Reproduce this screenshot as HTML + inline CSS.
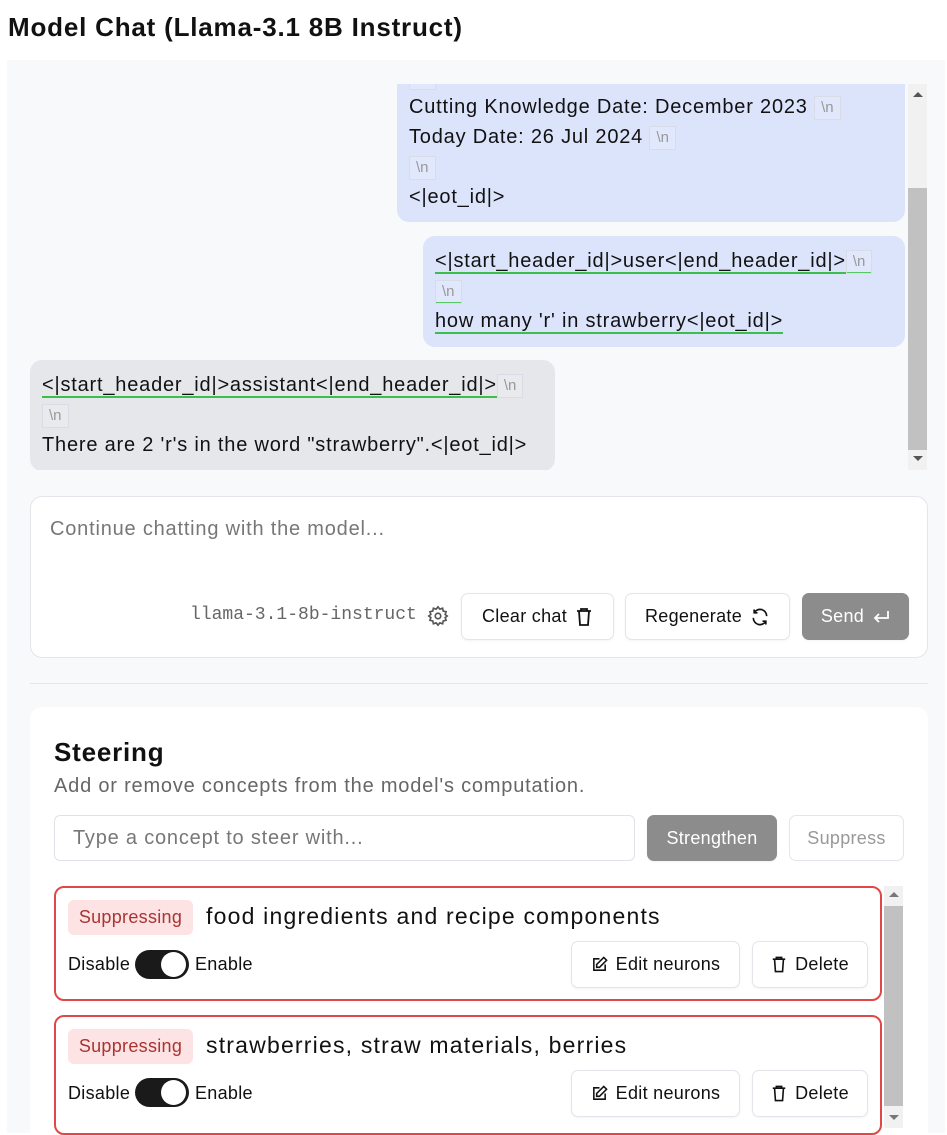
<!DOCTYPE html>
<html><head><meta charset="utf-8"><style>
*{box-sizing:border-box;margin:0;padding:0}
body{width:947px;height:1133px;overflow:hidden;background:#fff;font-family:"Liberation Sans",sans-serif;color:#111;position:relative;letter-spacing:0.8px}
.a{position:absolute}
.t{font-size:20px;line-height:30px;white-space:nowrap}
.nl{display:inline-block;border:1px solid #d8dce6;color:#999;font-size:15px;line-height:22px;padding:0 6px;vertical-align:middle;background:rgba(255,255,255,.15);letter-spacing:0}
.u{border-bottom:2px solid #3bbf4c}
.btn{position:absolute;background:#fff;border:1px solid #e3e5ea;border-radius:7px;font-size:18px;display:flex;align-items:center;justify-content:center;gap:8px;box-shadow:0 1px 2px rgba(0,0,0,.05);letter-spacing:0.3px}
svg{display:block}
</style></head><body>
<div class="a" style="left:8px;top:12px;font-size:26px;font-weight:bold">Model Chat (Llama-3.1 8B Instruct)</div>
<div class="a" style="left:7px;top:60px;width:938px;height:1073px;background:#f8f9fb"></div>

<div class="a" style="left:7px;top:84px;width:920px;height:386px;overflow:hidden">
 <div class="a" style="left:390px;top:-40px;width:508px;height:178px;background:#dce4fb;border-radius:12px;padding:18px 12px 0">
  <div class="t"><span class="nl">\n</span></div>
  <div class="t">Cutting Knowledge Date: December 2023 <span class="nl">\n</span></div>
  <div class="t">Today Date: 26 Jul 2024 <span class="nl">\n</span></div>
  <div class="t"><span class="nl">\n</span></div>
  <div class="t">&lt;|eot_id|&gt;</div>
 </div>
 <div class="a" style="left:416px;top:152px;width:482px;height:111px;background:#dce4fb;border-radius:12px;padding:10px 12px 0">
  <div class="t"><span class="u">&lt;|start_header_id|&gt;user&lt;|end_header_id|&gt;<span class="nl">\n</span></span></div>
  <div class="t"><span class="u"><span class="nl">\n</span></span></div>
  <div class="t"><span class="u">how many 'r' in strawberry&lt;|eot_id|&gt;</span></div>
 </div>
 <div class="a" style="left:23px;top:276px;width:525px;height:111px;background:#e5e7eb;border-radius:12px;padding:10px 12px 0">
  <div class="t"><span class="u">&lt;|start_header_id|&gt;assistant&lt;|end_header_id|&gt;</span><span class="nl">\n</span></div>
  <div class="t"><span class="nl">\n</span></div>
  <div class="t">There are 2 'r's in the word "strawberry".&lt;|eot_id|&gt;</div>
 </div>
 <div class="a" style="left:901px;top:0;width:19px;height:386px;background:#f1f1f1"></div>
 <div class="a" style="left:901px;top:104px;width:19px;height:262px;background:#c1c1c1"></div>
 <div class="a" style="left:906px;top:8px;border:5px solid transparent;border-bottom:5px solid #555;border-top:0"></div>
 <div class="a" style="left:906px;top:372px;border:5px solid transparent;border-top:5px solid #555;border-bottom:0"></div>
</div>

<div class="a" style="left:30px;top:496px;width:898px;height:162px;background:#fff;border:1px solid #e3e5ea;border-radius:12px"></div>
<div class="a" style="left:50px;top:518px;font-size:20px;color:#777">Continue chatting with the model...</div>
<div class="a" style="left:190px;top:605px;font-family:'Liberation Mono',monospace;font-size:18px;color:#666;letter-spacing:0">llama-3.1-8b-instruct</div>
<svg class="a" style="left:427px;top:605px" width="22" height="22" viewBox="0 0 24 24" fill="none" stroke="#555" stroke-width="1.8"><circle cx="12" cy="12" r="3"/><path d="M12 2l2 2.5 3-1 .7 3.1 3.1.7-1 3 2.2 1.7-2.2 1.7 1 3-3.1.7-.7 3.1-3-1L12 22l-2-2.5-3 1-.7-3.1-3.1-.7 1-3L2 12l2.2-1.7-1-3 3.1-.7L7 3.5l3 1z"/></svg>
<div class="btn" style="left:461px;top:593px;width:153px;height:47px">Clear chat <svg width="18" height="20" viewBox="0 0 18 20" fill="none" stroke="#111" stroke-width="1.8"><path d="M2 4h14M6 4V2h6v2M4 4l1 14h8l1-14"/></svg></div>
<div class="btn" style="left:625px;top:593px;width:165px;height:47px">Regenerate <svg width="20" height="20" viewBox="0 0 24 24" fill="none" stroke="#111" stroke-width="2"><path d="M20 11A8 8 0 0 0 5 7M4 13a8 8 0 0 0 15 4M5 3v4h4M19 21v-4h-4"/></svg></div>
<div class="btn" style="left:802px;top:593px;width:107px;height:47px;background:#8c8c8c;border-color:#8c8c8c;color:#fff">Send <svg width="18" height="16" viewBox="0 0 18 16" fill="none" stroke="#fff" stroke-width="1.8"><path d="M16 2v7H3M7 5L3 9l4 4"/></svg></div>

<div class="a" style="left:30px;top:683px;width:898px;height:1px;background:#e3e5ea"></div>

<div class="a" style="left:30px;top:707px;width:898px;height:426px;background:#fff;border-radius:12px 12px 0 0"></div>
<div class="a" style="left:54px;top:737px;font-size:26px;font-weight:bold">Steering</div>
<div class="a" style="left:54px;top:775px;font-size:20px;color:#666">Add or remove concepts from the model's computation.</div>
<div class="a" style="left:54px;top:815px;width:581px;height:46px;border:1px solid #dfe2e7;border-radius:6px;padding:11px 18px;font-size:20px;color:#777">Type a concept to steer with...</div>
<div class="btn" style="left:647px;top:815px;width:130px;height:46px;background:#8c8c8c;border-color:#8c8c8c;color:#fff">Strengthen</div>
<div class="btn" style="left:789px;top:815px;width:115px;height:46px;color:#999;box-shadow:none">Suppress</div>

<div class="a" style="left:884px;top:886px;width:19px;height:242px;background:#f1f1f1"></div>
<div class="a" style="left:884px;top:906px;width:19px;height:200px;background:#c1c1c1"></div>
<div class="a" style="left:889px;top:892px;border:5px solid transparent;border-bottom:5px solid #777;border-top:0"></div>
<div class="a" style="left:889px;top:1115px;border:5px solid transparent;border-top:5px solid #777;border-bottom:0"></div>

<div class="a" style="left:54px;top:886px;width:828px;height:115px;border:2px solid #e04848;border-radius:10px"></div>
<div class="a" style="left:54px;top:1015px;width:828px;height:120px;border:2px solid #e04848;border-radius:10px"></div>

<div class="a" style="left:68px;top:900px;width:125px;height:35px;background:#fde3e3;border-radius:6px;color:#a33;font-size:18px;line-height:35px;text-align:center;letter-spacing:0.3px">Suppressing</div>
<div class="a" style="left:206px;top:903px;font-size:23px;letter-spacing:1.2px">food ingredients and recipe components</div>
<div class="a" style="left:68px;top:954px;font-size:18px;letter-spacing:0.3px">Disable</div>
<div class="a" style="left:135px;top:950px;width:54px;height:29px;background:#1a1a1a;border-radius:15px"><div class="a" style="left:26px;top:2px;width:25px;height:25px;background:#fff;border-radius:50%"></div></div>
<div class="a" style="left:195px;top:954px;font-size:18px;letter-spacing:0.3px">Enable</div>
<div class="btn" style="left:571px;top:941px;width:169px;height:47px"><svg width="17" height="17" viewBox="0 0 24 24" fill="none" stroke="#111" stroke-width="2.2"><path d="M12 4H4v16h16v-8M18 2l4 4-10 10H8v-4z"/></svg>Edit neurons</div>
<div class="btn" style="left:752px;top:941px;width:116px;height:47px"><svg width="16" height="19" viewBox="0 0 18 20" fill="none" stroke="#111" stroke-width="1.8"><path d="M2 4h14M6 4V2h6v2M4 4l1 14h8l1-14"/></svg>Delete</div>

<div class="a" style="left:68px;top:1029px;width:125px;height:35px;background:#fde3e3;border-radius:6px;color:#a33;font-size:18px;line-height:35px;text-align:center;letter-spacing:0.3px">Suppressing</div>
<div class="a" style="left:206px;top:1032px;font-size:23px;letter-spacing:1.2px">strawberries, straw materials, berries</div>
<div class="a" style="left:68px;top:1083px;font-size:18px;letter-spacing:0.3px">Disable</div>
<div class="a" style="left:135px;top:1078px;width:54px;height:29px;background:#1a1a1a;border-radius:15px"><div class="a" style="left:26px;top:2px;width:25px;height:25px;background:#fff;border-radius:50%"></div></div>
<div class="a" style="left:195px;top:1083px;font-size:18px;letter-spacing:0.3px">Enable</div>
<div class="btn" style="left:571px;top:1070px;width:169px;height:47px"><svg width="17" height="17" viewBox="0 0 24 24" fill="none" stroke="#111" stroke-width="2.2"><path d="M12 4H4v16h16v-8M18 2l4 4-10 10H8v-4z"/></svg>Edit neurons</div>
<div class="btn" style="left:752px;top:1070px;width:116px;height:47px"><svg width="16" height="19" viewBox="0 0 18 20" fill="none" stroke="#111" stroke-width="1.8"><path d="M2 4h14M6 4V2h6v2M4 4l1 14h8l1-14"/></svg>Delete</div>
</body></html>
